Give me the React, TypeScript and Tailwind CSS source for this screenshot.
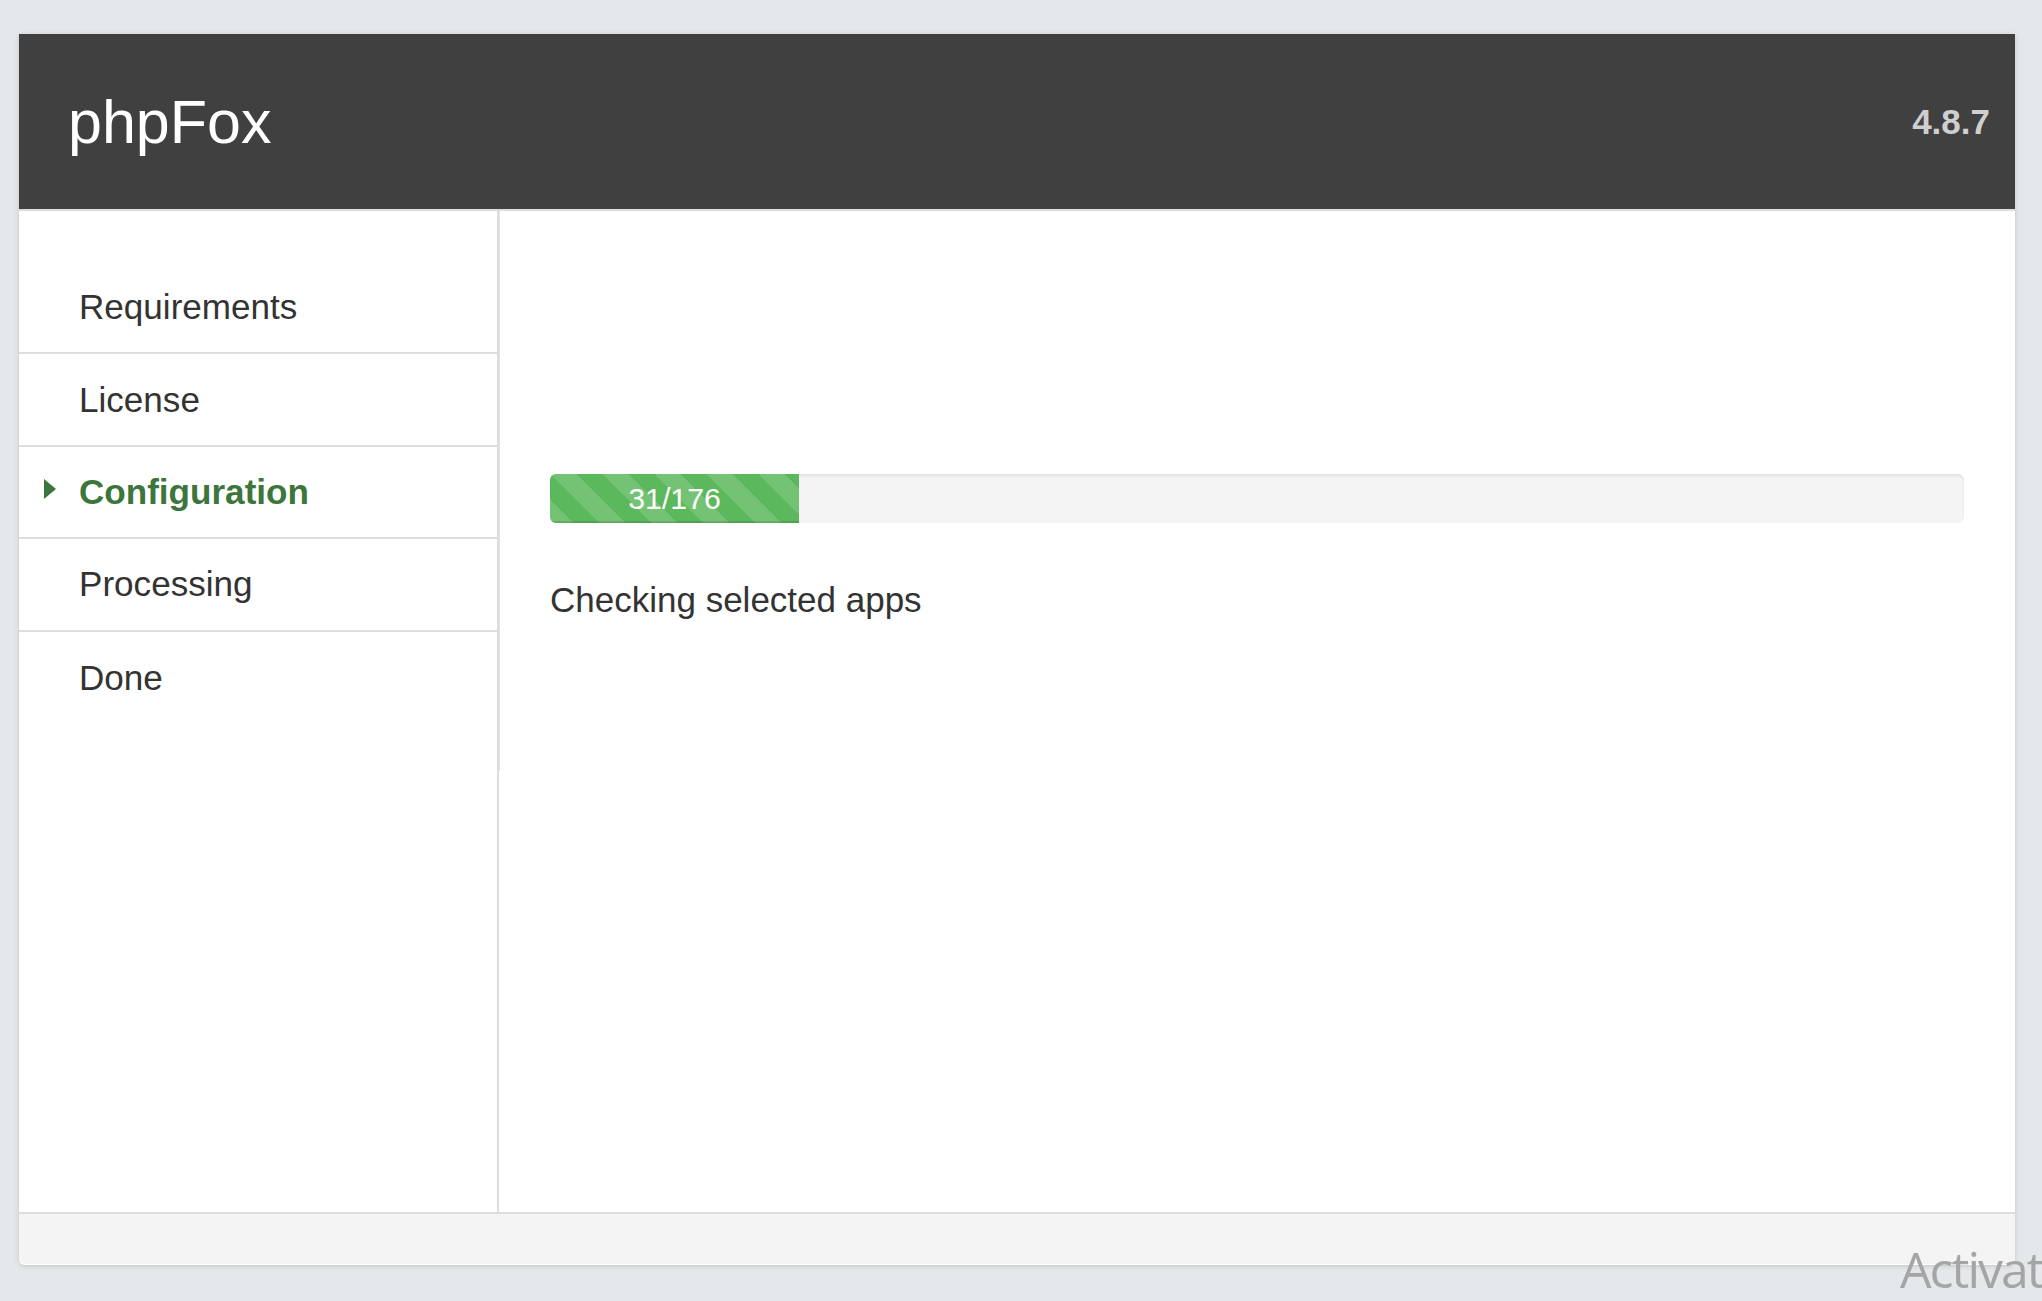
import React from "react";

const steps = ["Requirements", "License", "Configuration", "Processing", "Done"];
const active = "Configuration";
const done = 31;
const total = 176;

export default function App() {
  return (
    <div className="relative h-screen w-full overflow-hidden bg-[#e4e8eb] font-['Liberation_Sans',Arial,sans-serif]">
      <div className="pt-[34px] pl-[19px] pr-[27px]">
        <div className="bg-white rounded-b-[6px] shadow-[0_1px_5px_rgba(0,0,0,0.16)]">
          {/* Header */}
          <div className="h-[177px] bg-[#404040] border-b-2 border-[#dddddd] flex items-center justify-between pl-[49px] pr-[25px]">
            <div className="text-white text-[61px] leading-[70px]">phpFox</div>
            <div className="text-[#cfcfcf] text-[35px] leading-[40px] font-bold">4.8.7</div>
          </div>

          {/* Body */}
          <div className="flex h-[1003px] border-b-2 border-[#dddddd]">
            <div className="w-[480px] shrink-0 border-r-2 border-[#dddddd] pt-[51px]">
              {steps.map((s, i) => {
                const isActive = s === active;
                return (
                  <div
                    key={s}
                    className={
                      "relative flex items-center h-[92.4px] pl-[60px] " +
                      (i < steps.length - 1 ? "border-b-2 border-[#dddddd]" : "")
                    }
                  >
                    {isActive && (
                      <svg
                        className="absolute left-[25px] top-[32px]"
                        width="12"
                        height="20"
                        viewBox="0 0 12 20"
                      >
                        <polygon points="0,0 12,10 0,20" fill="#3c763d" />
                      </svg>
                    )}
                    <span
                      className={
                        "text-[35.1px] leading-[40px] " +
                        (isActive ? "font-bold text-[#3c763d]" : "text-[#333333]")
                      }
                    >
                      {s}
                    </span>
                  </div>
                );
              })}
            </div>

            <div className="flex-1 flex">
              <div className="w-px h-[560px] bg-[#e2e2e2] shrink-0" />
              <div className="flex-1 pl-[50px] pr-[51px] pt-[263px]">
                <div className="h-[49px] rounded-[6px] bg-[#f4f4f4] shadow-[inset_0_2px_3px_rgba(0,0,0,0.08)] overflow-hidden">
                  <div
                    className="h-full bg-[#5cb85c] bg-[linear-gradient(45deg,rgba(255,255,255,0.15)_25%,transparent_25%,transparent_50%,rgba(255,255,255,0.15)_50%,rgba(255,255,255,0.15)_75%,transparent_75%,transparent)] bg-[length:52px_52px] shadow-[inset_0_-2px_0_rgba(0,0,0,0.12)] text-center text-white text-[30.3px] leading-[49px]"
                    style={{ width: `${(done / total) * 100}%` }}
                  >
                    {done}/{total}
                  </div>
                </div>
                <p className="mt-[57px] text-[35px] leading-[40px] text-[#333333]">
                  Checking selected apps
                </p>
              </div>
            </div>
          </div>

          {/* Footer */}
          <div className="h-[51px] bg-[#f4f4f4] border-b border-white rounded-bl-[6px]" />
        </div>
      </div>

      <div className="absolute left-[1900px] top-[1244px] whitespace-nowrap text-[50px] leading-[50px] tracking-[-2px] text-[#a3a5a7] font-['Open_Sans',sans-serif]">
        Activate Windows
      </div>
    </div>
  );
}
